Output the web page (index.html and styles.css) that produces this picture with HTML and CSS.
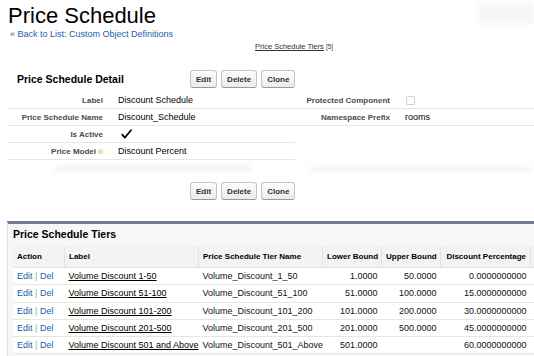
FILE: index.html
```html
<!DOCTYPE html>
<html lang="en">
<head>
  <meta charset="UTF-8">
  <title>Price Schedule</title>
  <link rel="stylesheet" href="styles.css">
</head>
<body>
  <!-- page header -->
  <div class="top">
    <div class="page-title">
      <h1>Price Schedule</h1>
      <a class="back" href="#">« Back to List: Custom Object Definitions</a>
    </div>
    <div class="ghost"></div>
  </div>

  <div class="rel-links">
    <a href="#">Price Schedule Tiers</a> <span class="count">[5]</span>
  </div>

  <!-- detail block -->
  <div class="detail">
    <div class="pb-header">
      <h2>Price Schedule Detail</h2>
      <div class="btns">
        <button class="btn">Edit</button>
        <button class="btn">Delete</button>
        <button class="btn">Clone</button>
      </div>
    </div>

    <table class="detail-list">
      <tr>
        <td class="label-col">Label</td>
        <td class="data-col">Discount Schedule</td>
        <td class="label-col">Protected Component</td>
        <td class="data-col"><span class="checkbox"></span></td>
      </tr>
      <tr>
        <td class="label-col">Price Schedule Name</td>
        <td class="data-col">Discount_Schedule</td>
        <td class="label-col">Namespace Prefix</td>
        <td class="data-col">rooms</td>
      </tr>
      <tr>
        <td class="label-col">Is Active</td>
        <td class="data-col">
          <svg class="check" width="11" height="10" viewBox="0 0 11 10"><path d="M1.2 5.6 L3.8 8.6 L10 1.2" fill="none" stroke="#000" stroke-width="1.7" stroke-linecap="round" stroke-linejoin="round"/></svg>
        </td>
        <td class="empty"></td>
        <td class="empty"></td>
      </tr>
      <tr>
        <td class="label-col">Price Model<span class="help"></span></td>
        <td class="data-col">Discount Percent</td>
        <td class="empty"></td>
        <td class="empty"></td>
      </tr>
    </table>

    <div class="smudge">
      <div class="smudge-left"></div>
      <div class="smudge-right"></div>
    </div>

    <div class="pb-bottom">
      <div class="btns">
        <button class="btn">Edit</button>
        <button class="btn">Delete</button>
        <button class="btn">Clone</button>
      </div>
    </div>
  </div>

  <!-- related list -->
  <div class="related">
    <h3>Price Schedule Tiers</h3>
    <table class="list">
      <tr class="header-row">
        <th class="c-action">Action</th>
        <th class="c-label">Label</th>
        <th class="c-name">Price Schedule Tier Name</th>
        <th class="c-num c-lower">Lower Bound</th>
        <th class="c-num c-upper">Upper Bound</th>
        <th class="c-num c-pct">Discount Percentage</th>
        <th class="c-more"></th>
      </tr>
      <tr>
        <td><a class="act" href="#">Edit</a> <span class="sep">|</span> <a class="act" href="#">Del</a></td>
        <td><a class="rec" href="#">Volume Discount 1-50</a></td>
        <td>Volume_Discount_1_50</td>
        <td class="c-num">1.0000</td>
        <td class="c-num">50.0000</td>
        <td class="c-num">0.0000000000</td>
        <td></td>
      </tr>
      <tr>
        <td><a class="act" href="#">Edit</a> <span class="sep">|</span> <a class="act" href="#">Del</a></td>
        <td><a class="rec" href="#">Volume Discount 51-100</a></td>
        <td>Volume_Discount_51_100</td>
        <td class="c-num">51.0000</td>
        <td class="c-num">100.0000</td>
        <td class="c-num">15.0000000000</td>
        <td></td>
      </tr>
      <tr>
        <td><a class="act" href="#">Edit</a> <span class="sep">|</span> <a class="act" href="#">Del</a></td>
        <td><a class="rec" href="#">Volume Discount 101-200</a></td>
        <td>Volume_Discount_101_200</td>
        <td class="c-num">101.0000</td>
        <td class="c-num">200.0000</td>
        <td class="c-num">30.0000000000</td>
        <td></td>
      </tr>
      <tr>
        <td><a class="act" href="#">Edit</a> <span class="sep">|</span> <a class="act" href="#">Del</a></td>
        <td><a class="rec" href="#">Volume Discount 201-500</a></td>
        <td>Volume_Discount_201_500</td>
        <td class="c-num">201.0000</td>
        <td class="c-num">500.0000</td>
        <td class="c-num">45.0000000000</td>
        <td></td>
      </tr>
      <tr>
        <td><a class="act" href="#">Edit</a> <span class="sep">|</span> <a class="act" href="#">Del</a></td>
        <td><a class="rec" href="#">Volume Discount 501 and Above</a></td>
        <td>Volume_Discount_501_Above</td>
        <td class="c-num">501.0000</td>
        <td class="c-num"></td>
        <td class="c-num">60.0000000000</td>
        <td></td>
      </tr>
    </table>
  </div>
</body>
</html>
```

FILE: styles.css
```css
html, body {
  overflow: hidden;
}
body {
  margin: 0;
  background-color: #fff;
  font-family: "Liberation Sans", Arial, sans-serif;
  font-size: 9px;
  color: #000;
  width: 534px;
  height: 356px;
}
a {
  text-decoration: none;
}
.top {
  display: flex;
  justify-content: space-between;
  align-items: flex-start;
}
.page-title {
  padding-left: 8px;
}
h1 {
  margin: 3px 0 0 0;
  font-size: 22px;
  line-height: 26px;
  font-weight: normal;
  color: #000;
}
.back {
  display: block;
  margin: 0 0 0 2px;
  font-size: 9px;
  line-height: 11px;
  color: #1a5ea8;
}
.ghost {
  width: 56px;
  height: 20px;
  margin-top: 4px;
  background-color: #f6f6f7;
  filter: blur(2px);
}
.rel-links {
  padding: 2px 0 0 255px;
  font-size: 7.5px;
  line-height: 10px;
  color: #444;
}
.rel-links a {
  color: #333;
  text-decoration: underline;
}
.rel-links .count {
  font-size: 6.5px;
}
.detail {
  margin-top: 18px;
}
.pb-header {
  display: flex;
  align-items: center;
  padding-left: 17px;
  height: 18px;
}
h2 {
  margin: 0;
  width: 173px;
  font-size: 10.5px;
  font-weight: bold;
  color: #000;
}
.btns {
  display: flex;
  gap: 4px;
}
.btn {
  font-family: "Liberation Sans", Arial, sans-serif;
  font-size: 8px;
  font-weight: bold;
  color: #333;
  height: 18px;
  padding: 0 5px;
  background: linear-gradient(#fdfdfd, #ececec);
  border: 1px solid #c4c4c4;
  border-bottom-color: #9a9a9a;
  border-radius: 3px;
}
.detail-list {
  margin: 4px 0 0 8px;
  border-collapse: collapse;
  width: 526px;
}
.detail-list td {
  height: 16px;
  padding: 0;
  vertical-align: middle;
}
.label-col {
  text-align: right;
  font-size: 8px;
  font-weight: bold;
  color: #4a4a56;
  border-bottom: 1px solid #e6e6e6;
  padding-right: 7px !important;
}
.data-col {
  font-size: 9px;
  border-bottom: 1px solid #e6e6e6;
  padding-left: 8px !important;
}
.detail-list td:nth-child(1) {
  width: 95px;
}
.detail-list td:nth-child(2) {
  width: 177px;
}
.detail-list td:nth-child(3) {
  width: 95px;
}
.detail-list td.empty {
  border-bottom: none;
}
.checkbox {
  display: inline-block;
  width: 7px;
  height: 7px;
  border: 1px solid #d2d2d2;
  border-radius: 1px;
  vertical-align: middle;
  margin-left: 1px;
}
.check {
  display: block;
  margin-left: 3px;
}
.help {
  display: inline-block;
  width: 5px;
  height: 5px;
  margin-left: 2px;
  border-radius: 50%;
  background-color: #efd9b8;
  vertical-align: middle;
}
.smudge {
  display: flex;
  height: 5px;
  margin-top: 6px;
}
.smudge-left {
  width: 195px;
  margin-left: 55px;
  background-color: #f2f2f2;
  filter: blur(2px);
}
.smudge-right {
  width: 220px;
  margin-left: 60px;
  background-color: #f3f3f3;
  filter: blur(2px);
}
.pb-bottom {
  padding: 11px 0 0 190px;
}
.related {
  margin: 21px 0 0 7px;
  border-top: 3px solid #737c94;
  border-left: 1px solid #e4e4e4;
  background-color: #f7f7f7;
  padding: 3px 0 6px 5px;
}
h3 {
  margin: 0 0 5px 0;
  font-size: 10.5px;
  line-height: 14px;
  font-weight: bold;
  color: #000;
}
.list {
  border-collapse: collapse;
  table-layout: fixed;
  background-color: #fff;
  width: 521px;
}
.list th {
  background-color: #f2f3f3;
  font-size: 8px;
  font-weight: bold;
  text-align: left;
  white-space: nowrap;
  height: 21px;
  padding: 0 4px;
  border-left: 1px solid #e3e3e3;
  border-bottom: 1px solid #e0e3e5;
}
.list th:first-child {
  border-left: none;
}
.list td {
  font-size: 9px;
  height: 16.25px;
  padding: 0 4px;
  border-bottom: 1px solid #e6e6e6;
  white-space: nowrap;
  overflow: hidden;
  color: #111;
}
.list .c-num {
  text-align: right;
}
.c-action {
  width: 43px;
}
.c-label {
  width: 125px;
}
.c-name {
  width: 115px;
}
.c-lower {
  width: 50px;
}
.c-upper {
  width: 50px;
}
.c-pct {
  width: 81px;
}
.c-more {
  width: 0;
}
.act {
  color: #1a5ea8;
}
.sep {
  color: #9aa;
}
.rec {
  color: #000;
  text-decoration: underline;
}
```
